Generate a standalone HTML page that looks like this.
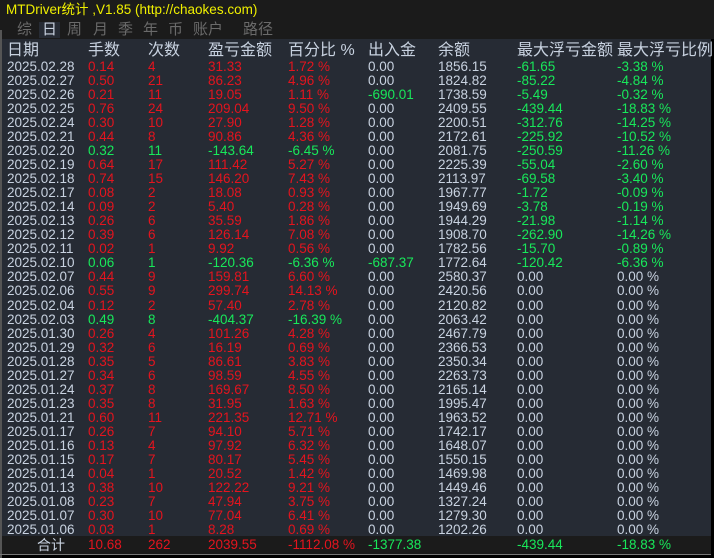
<!DOCTYPE html>
<html><head><meta charset="utf-8"><style>
*{margin:0;padding:0}
body{width:714px;height:558px;background:#000;overflow:hidden;position:relative;font-family:"Liberation Sans","Noto Sans CJK SC",sans-serif;font-size:13.5px}
#top{position:absolute;left:0;top:0;width:714px;height:39px;background:#1b1b1b}
#title{position:absolute;left:6px;top:2px;color:#f0f000;font-size:13.5px;line-height:16px;white-space:nowrap}
#tabs{position:absolute;left:17px;top:22px;color:#6a6a6a;font-size:15px;line-height:16px;white-space:nowrap}
#tabs span{position:absolute;top:0}
#tbl{position:absolute;left:2px;top:39px;width:709px;height:497px;background:#262b34}
#foot{position:absolute;left:2px;top:536px;width:709px;height:18px;background:#1b1b1b}
#lb{position:absolute;left:0;top:30px;width:2px;height:528px;background:#555}
#bl{position:absolute;left:0;top:554px;width:711px;height:1px;background:#777}
.r{position:absolute;left:0;height:14px;line-height:14px;white-space:nowrap;color:#c8d2e0}
.r span{position:absolute;top:0}
.h{font-size:16px;color:#c8d2e0}
.R{color:#e4141e}.G{color:#18e85a}
</style></head><body>
<div id="top"><div id="title">MTDriver统计 ,V1.85 (http://chaokes.com)</div>
<div id="tabs"><span style="left:0">综</span><span style="left:25px;color:#c8d2e0;background:#262b34;padding:0 3px;margin-left:-3px">日</span><span style="left:50px">周</span><span style="left:76px">月</span><span style="left:101px">季</span><span style="left:126px">年</span><span style="left:151px">币</span><span style="left:176px">账户</span><span style="left:226px">路径</span></div></div>
<div id="tbl"></div><div id="foot"></div><div id="lb"></div><div id="bl"></div>
<div id="rows"></div>
<script>
var cols=[7,88,148,208,288,368,438,517,617];
var hdr=["日期","手数","次数","盈亏金额","百分比 %","出入金","余额","最大浮亏金额","最大浮亏比例"];
var d=`2025.02.28|0.14|4|31.33|1.72 %|0.00|1856.15|-61.65|-3.38 %
2025.02.27|0.50|21|86.23|4.96 %|0.00|1824.82|-85.22|-4.84 %
2025.02.26|0.21|11|19.05|1.11 %|-690.01|1738.59|-5.49|-0.32 %
2025.02.25|0.76|24|209.04|9.50 %|0.00|2409.55|-439.44|-18.83 %
2025.02.24|0.30|10|27.90|1.28 %|0.00|2200.51|-312.76|-14.25 %
2025.02.21|0.44|8|90.86|4.36 %|0.00|2172.61|-225.92|-10.52 %
2025.02.20|0.32|11|-143.64|-6.45 %|0.00|2081.75|-250.59|-11.26 %
2025.02.19|0.64|17|111.42|5.27 %|0.00|2225.39|-55.04|-2.60 %
2025.02.18|0.74|15|146.20|7.43 %|0.00|2113.97|-69.58|-3.40 %
2025.02.17|0.08|2|18.08|0.93 %|0.00|1967.77|-1.72|-0.09 %
2025.02.14|0.09|2|5.40|0.28 %|0.00|1949.69|-3.78|-0.19 %
2025.02.13|0.26|6|35.59|1.86 %|0.00|1944.29|-21.98|-1.14 %
2025.02.12|0.39|6|126.14|7.08 %|0.00|1908.70|-262.90|-14.26 %
2025.02.11|0.02|1|9.92|0.56 %|0.00|1782.56|-15.70|-0.89 %
2025.02.10|0.06|1|-120.36|-6.36 %|-687.37|1772.64|-120.42|-6.36 %
2025.02.07|0.44|9|159.81|6.60 %|0.00|2580.37|0.00|0.00 %
2025.02.06|0.55|9|299.74|14.13 %|0.00|2420.56|0.00|0.00 %
2025.02.04|0.12|2|57.40|2.78 %|0.00|2120.82|0.00|0.00 %
2025.02.03|0.49|8|-404.37|-16.39 %|0.00|2063.42|0.00|0.00 %
2025.01.30|0.26|4|101.26|4.28 %|0.00|2467.79|0.00|0.00 %
2025.01.29|0.32|6|16.19|0.69 %|0.00|2366.53|0.00|0.00 %
2025.01.28|0.35|5|86.61|3.83 %|0.00|2350.34|0.00|0.00 %
2025.01.27|0.34|6|98.59|4.55 %|0.00|2263.73|0.00|0.00 %
2025.01.24|0.37|8|169.67|8.50 %|0.00|2165.14|0.00|0.00 %
2025.01.23|0.35|8|31.95|1.63 %|0.00|1995.47|0.00|0.00 %
2025.01.21|0.60|11|221.35|12.71 %|0.00|1963.52|0.00|0.00 %
2025.01.17|0.26|7|94.10|5.71 %|0.00|1742.17|0.00|0.00 %
2025.01.16|0.13|4|97.92|6.32 %|0.00|1648.07|0.00|0.00 %
2025.01.15|0.17|7|80.17|5.45 %|0.00|1550.15|0.00|0.00 %
2025.01.14|0.04|1|20.52|1.42 %|0.00|1469.98|0.00|0.00 %
2025.01.13|0.38|10|122.22|9.21 %|0.00|1449.46|0.00|0.00 %
2025.01.08|0.23|7|47.94|3.75 %|0.00|1327.24|0.00|0.00 %
2025.01.07|0.30|10|77.04|6.41 %|0.00|1279.30|0.00|0.00 %
2025.01.06|0.03|1|8.28|0.69 %|0.00|1202.26|0.00|0.00 %`.split("\n");
var h='<div class="r h" style="top:43px;height:16px;line-height:16px">';
hdr.forEach((t,i)=>h+='<span style="left:'+cols[i]+'px">'+t+'</span>');h+='</div>';
d.forEach((l,j)=>{var f=l.split("|");var neg=f[3][0]=="-";var c=neg?"G":"R";
h+='<div class="r" style="top:'+(60+j*14.03)+'px">';
f.forEach((t,i)=>{var k="";if(i>=1&&i<=4)k=c;if(i==5&&t[0]=="-")k="G";if(i>=7&&t[0]=="-")k="G";
h+='<span class="'+k+'" style="left:'+cols[i]+'px">'+t+'</span>'});h+='</div>'});
h+='<div class="r" style="top:538px"><span style="left:37px;font-size:14px">合计</span><span class="R" style="left:88px">10.68</span><span class="R" style="left:148px">262</span><span class="R" style="left:208px">2039.55</span><span class="R" style="left:288px">-1112.08 %</span><span class="G" style="left:368px">-1377.38</span><span class="G" style="left:517px">-439.44</span><span class="G" style="left:617px">-18.83 %</span></div>';
document.getElementById("rows").innerHTML=h;
</script>
</body></html>
